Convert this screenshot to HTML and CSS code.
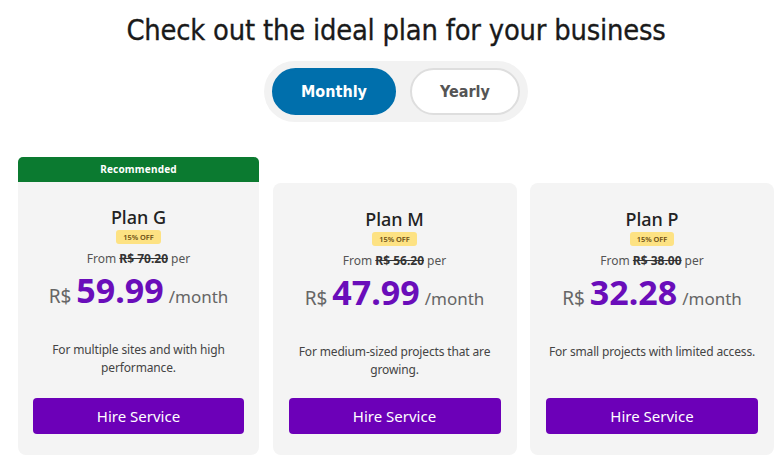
FILE: index.html
```html
<!DOCTYPE html>
<html>
<head>
<meta charset="utf-8">
<link rel="stylesheet" href="styles.css">
</head>
<body>
<main class="page">
  <h1 class="title">Check out the ideal plan for your business</h1>
  <div class="toggle-wrap">
    <div class="toggle">
      <button class="tab tab-active">Monthly</button>
      <button class="tab">Yearly</button>
    </div>
  </div>
  <section class="plans">
    <div class="plan plan-rec">
      <div class="rec">Recommended</div>
      <div class="card">
        <h2 class="name">Plan G</h2>
        <span class="badge">15% OFF</span>
        <p class="from">From <s>R$ 70.20</s> per</p>
        <p class="price"><span class="cur">R$</span><span class="amt">59.99</span><span class="per">/month</span></p>
        <p class="desc">For multiple sites and with high performance.</p>
        <button class="hire">Hire Service</button>
      </div>
    </div>
    <div class="plan">
      <div class="card">
        <h2 class="name">Plan M</h2>
        <span class="badge">15% OFF</span>
        <p class="from">From <s>R$ 56.20</s> per</p>
        <p class="price"><span class="cur">R$</span><span class="amt">47.99</span><span class="per">/month</span></p>
        <p class="desc">For medium-sized projects that are growing.</p>
        <button class="hire">Hire Service</button>
      </div>
    </div>
    <div class="plan">
      <div class="card">
        <h2 class="name">Plan P</h2>
        <span class="badge">15% OFF</span>
        <p class="from">From <s>R$ 38.00</s> per</p>
        <p class="price"><span class="cur">R$</span><span class="amt">32.28</span><span class="per">/month</span></p>
        <p class="desc">For small projects with limited access.</p>
        <button class="hire">Hire Service</button>
      </div>
    </div>
  </section>
</main>
</body>
</html>
```
FILE: styles.css
```css
* { box-sizing: border-box; }
html, body { margin: 0; padding: 0; background: #fff; overflow: hidden; }
.page {
  padding: 0 8px 0 18px;
  font-family: "Noto Sans", sans-serif;
  color: #333;
}
.title {
  margin: 0;
  padding-top: 12px;
  height: 55px;
  text-align: center;
  font-family: "DejaVu Sans Condensed", "DejaVu Sans", sans-serif;
  font-weight: 500;
  font-size: 28.8px;
  line-height: 36px;
  color: #1a1a1a;
  letter-spacing: -0.2px;
  -webkit-text-stroke: 0.3px #1a1a1a;
}
.toggle-wrap { display: flex; justify-content: center; margin-top: 6px; }
.toggle {
  display: flex;
  gap: 14px;
  padding: 7px 8px;
  background: #f2f2f2;
  border-radius: 31px;
}
.tab {
  width: 124px;
  height: 47px;
  border-radius: 24px;
  border: 2px solid #dedede;
  background: #fff;
  font-family: "DejaVu Sans Condensed", sans-serif;
  font-weight: bold;
  font-size: 16px;
  color: #555;
}
.tab + .tab { width: 110px; }
.tab-active { background: #006fac; border-color: #006fac; color: #fff; }
.plans {
  display: grid;
  grid-template-columns: 241px 244px 244px;
  gap: 13.5px;
  margin-top: 35px;
  align-items: end;
}
.plan { display: flex; flex-direction: column; }
.rec {
  height: 25px;
  background: #0b7a30;
  color: #fff;
  border-radius: 5px 5px 0 0;
  font-size: 10px;
  font-weight: bold;
  text-align: center;
  line-height: 25px;
  letter-spacing: 0.2px;
}
.card {
  background: #f4f4f4;
  border-radius: 8px;
  height: 272px;
  padding: 24px 16px 0;
  display: flex;
  flex-direction: column;
  align-items: center;
}
.plan-rec .card { border-radius: 0 0 8px 8px; height: 273px; padding-left: 15px; padding-right: 15px; padding-top: 23px; }
.name {
  margin: 0;
  font-size: 18px;
  font-weight: 500;
  line-height: 24px;
  color: #222;
}
.badge {
  margin-top: 1px;
  height: 14px;
  padding: 0 7px;
  background: #fde283;
  border-radius: 3px;
  font-size: 7.4px;
  line-height: 14px;
  color: #6b4d12;
  font-weight: 600;
}
.from {
  margin: 6px 0 0;
  font-size: 12px;
  line-height: 18px;
  color: #555;
}
.from s { color: #333; font-weight: bold; }
.price {
  margin: 2px 0 0;
  display: flex;
  align-items: baseline;
  line-height: 40px;
  color: #666;
}
.cur { font-size: 19px; margin-right: 5px; }
.amt { font-size: 34px; font-weight: bold; color: #6a0dba; }
.per { font-size: 17px; margin-left: 5px; }
.desc {
  margin: 24px 0 0;
  min-height: 36px;
  font-size: 12px;
  line-height: 18px;
  color: #444;
  text-align: center;
  letter-spacing: -0.15px;
}
.hire {
  margin-top: 19px;
  width: 100%;
  height: 36px;
  border: 0;
  border-radius: 4px;
  background: #6c00b8;
  color: #fff;
  font-family: "Noto Sans", sans-serif;
  font-size: 15px;
}
.plan-rec .hire { margin-top: 21px; }
```
